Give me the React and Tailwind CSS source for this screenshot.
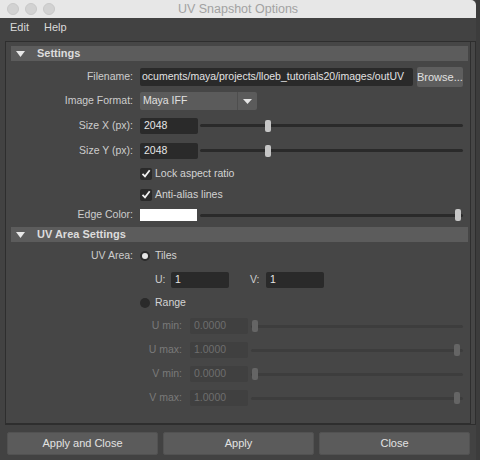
import React from 'react'

function Slider({ pos, disabled }) {
  return (
    <div className="relative flex h-[14px] flex-1 items-center">
      <div className={`h-[3px] w-full rounded-full ${disabled ? 'bg-[#3d3d3d]' : 'bg-[#2a2a2a]'}`} />
      <div
        className={`absolute top-[1px] h-[12px] w-[6px] rounded-[2px] ${disabled ? 'bg-[#656565]' : 'bg-[#c6c6c6]'}`}
        style={{ left: pos }}
      />
    </div>
  )
}

function Row({ label, h, labelW = 'w-[122px]', gap = 'ml-[7px]', disabled, children }) {
  return (
    <div className={`flex items-center ${h}`}>
      <div className={`${labelW} shrink-0 text-right ${disabled ? 'text-[#7a7a7a]' : 'text-[#cdcdcd]'}`}>{label}</div>
      <div className={`${gap} flex flex-1 items-center`}>{children}</div>
    </div>
  )
}

function Header({ title, className }) {
  return (
    <div className={`flex h-[15px] items-center bg-[#5c5c5c] ${className}`}>
      <svg width="9" height="6" viewBox="0 0 9 6" className="ml-[5px]">
        <path d="M0 0 H9 L4.5 6 Z" fill="#e8e8e8" />
      </svg>
      <span className="ml-[12px] text-[11px] font-bold text-[#dcdcdc]">{title}</span>
    </div>
  )
}

function Check({ label }) {
  return (
    <div className="flex items-center">
      <div className="flex h-[12px] w-[12px] items-center justify-center rounded-[2px] bg-[#2a2a2a]">
        <svg width="10" height="9" viewBox="0 0 10 9">
          <path d="M1.5 4.8 L4 7.3 L8.7 1.3" fill="none" stroke="#f0f0f0" strokeWidth="1.8" />
        </svg>
      </div>
      <span className="ml-[3px] text-[#d4d4d4]">{label}</span>
    </div>
  )
}

function RangeRow({ label, value, pos, h }) {
  return (
    <Row label={label} h={h} labelW="w-[171px]" gap="ml-[8px]" disabled>
      <div className="flex h-[16px] w-[58px] items-center rounded-[2px] bg-[#404040] pl-[4px] text-[#6e6e6e]">{value}</div>
      <div className="ml-[3px] flex flex-1">
        <Slider pos={pos} disabled />
      </div>
    </Row>
  )
}

export default function App() {
  return (
    <div className="h-[460px] w-[480px] overflow-hidden bg-[#3c3c3c] font-['Liberation_Sans',Arial,sans-serif] text-[10.5px]">
      <div className="h-full w-[476px] bg-[#424242]">
        {/* Title bar */}
        <div className="relative flex h-[18px] items-center rounded-tr-[5px] bg-[#e7e7e7]">
          <div className="ml-[7px] flex gap-[6px]">
            <div className="h-[12px] w-[12px] rounded-full border border-[#c8c8c8] bg-[#d2d2d2]" />
            <div className="h-[12px] w-[12px] rounded-full border border-[#c8c8c8] bg-[#d2d2d2]" />
            <div className="h-[12px] w-[12px] rounded-full border border-[#c8c8c8] bg-[#d2d2d2]" />
          </div>
          <div className="absolute inset-0 flex items-center justify-center text-[12.5px] text-[#a2a2a2]">UV Snapshot Options</div>
        </div>

        {/* Menu bar */}
        <div className="flex h-[19px] items-center gap-[15px] pl-[10px] text-[11px] text-[#dadada]">
          <span>Edit</span>
          <span>Help</span>
        </div>

        {/* Frame */}
        <div className="ml-[5px] mt-[4px] flex h-[384px] w-[471px] border border-[#2e2e2e] bg-[#464646]">
          <div className="flex-1 border-b border-r border-[#2e2e2e] pl-[5px] pr-[2px] pt-[4px]">
            <Header title="Settings" />

            <div className="pr-[5px]">
              <Row label="Filename:" h="h-[24px] mt-[4px]">
                <div className="flex h-[18px] w-[273px] items-center whitespace-nowrap rounded-[2px] bg-[#2a2a2a] pl-[2px] text-[10.5px] text-[#e2e2e2]">
                  ocuments/maya/projects/lloeb_tutorials20/images/outUV
                </div>
                <div className="ml-[4px] flex h-[20px] flex-1 items-center justify-center rounded-[2px] bg-[#5e5e5e] text-[11px] text-[#e0e0e0]">
                  Browse...
                </div>
              </Row>

              <Row label="Image Format:" h="h-[24px]">
                <div className="flex h-[18px] w-[117px] rounded-[2px] bg-[#5b5b5b]">
                  <div className="flex flex-1 items-center pl-[3px] text-[#e0e0e0]">Maya IFF</div>
                  <div className="flex w-[20px] items-center justify-center border-l border-[#4e4e4e]">
                    <svg width="9" height="5" viewBox="0 0 9 5">
                      <path d="M0 0 H9 L4.5 5 Z" fill="#e6e6e6" />
                    </svg>
                  </div>
                </div>
              </Row>

              <Row label="Size X (px):" h="h-[25px]">
                <div className="flex h-[16px] w-[58px] items-center rounded-[2px] bg-[#2a2a2a] pl-[4px] text-[#e6e6e6]">2048</div>
                <div className="ml-[2px] flex flex-1">
                  <Slider pos={65} />
                </div>
              </Row>

              <Row label="Size Y (px):" h="h-[25px]">
                <div className="flex h-[16px] w-[58px] items-center rounded-[2px] bg-[#2a2a2a] pl-[4px] text-[#e6e6e6]">2048</div>
                <div className="ml-[2px] flex flex-1">
                  <Slider pos={65} />
                </div>
              </Row>

              <Row label="" h="h-[21px]">
                <Check label="Lock aspect ratio" />
              </Row>
              <Row label="" h="h-[21px]">
                <Check label="Anti-alias lines" />
              </Row>

              <Row label="Edge Color:" h="h-[20px]">
                <div className="h-[12px] w-[57px] bg-white" />
                <div className="ml-[3px] flex flex-1">
                  <Slider pos={255} />
                </div>
              </Row>
            </div>

            <Header title="UV Area Settings" className="mt-[2px]" />

            <div className="pr-[5px]">
              <Row label="UV Area:" h="h-[22px] mt-[3px]">
                <div className="flex h-[10px] w-[10px] items-center justify-center rounded-full bg-[#2a2a2a]">
                  <div className="h-[6px] w-[6px] rounded-full bg-[#e4e4e4]" />
                </div>
                <span className="ml-[5px] text-[#d4d4d4]">Tiles</span>
              </Row>

              <Row label="" h="h-[25px]">
                <span className="ml-[15px] w-[16px] text-[#cdcdcd]">U:</span>
                <div className="flex h-[16px] w-[58px] items-center rounded-[2px] bg-[#2a2a2a] pl-[4px] text-[#e6e6e6]">1</div>
                <span className="ml-[21px] w-[16px] text-[#cdcdcd]">V:</span>
                <div className="flex h-[16px] w-[58px] items-center rounded-[2px] bg-[#2a2a2a] pl-[4px] text-[#e6e6e6]">1</div>
              </Row>

              <Row label="" h="h-[22px]">
                <div className="h-[10px] w-[10px] rounded-full bg-[#2a2a2a]" />
                <span className="ml-[5px] text-[#d4d4d4]">Range</span>
              </Row>

              <RangeRow label="U min:" value="0.0000" pos={1} h="h-[24px]" />
              <RangeRow label="U max:" value="1.0000" pos={203} h="h-[24px]" />
              <RangeRow label="V min:" value="0.0000" pos={1} h="h-[24px]" />
              <RangeRow label="V max:" value="1.0000" pos={203} h="h-[24px]" />
            </div>
          </div>
          <div className="w-[6px]" />
        </div>

        {/* Buttons */}
        <div className="mt-[7px] grid w-[470px] grid-cols-3 gap-[5px] pl-[7px] text-[11px] text-[#e2e2e2]">
          <div className="flex h-[23px] items-center justify-center rounded-[2px] border border-[#525252] bg-[#5b5b5b]">Apply and Close</div>
          <div className="flex h-[23px] items-center justify-center rounded-[2px] border border-[#525252] bg-[#5b5b5b]">Apply</div>
          <div className="flex h-[23px] items-center justify-center rounded-[2px] border border-[#525252] bg-[#5b5b5b]">Close</div>
        </div>
      </div>
    </div>
  )
}
